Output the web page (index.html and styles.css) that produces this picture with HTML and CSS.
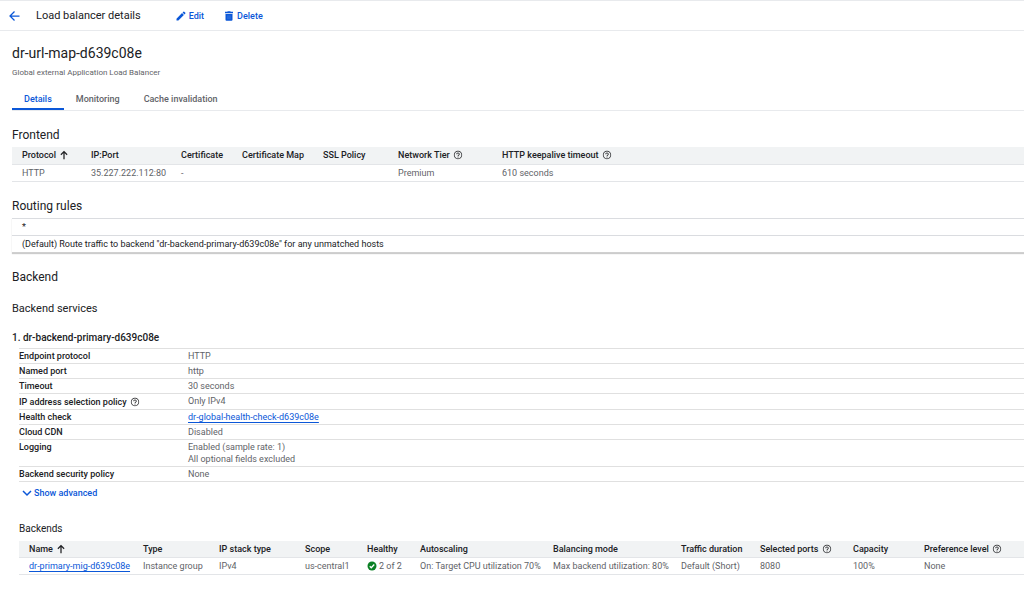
FILE: index.html
```html
<!DOCTYPE html>
<html lang="en">
<head>
    <meta charset="UTF-8">
    <meta name="viewport" content="width=device-width, initial-scale=1.0">
    <title>Load balancer details</title>
    <link rel="stylesheet" href="styles.css">
</head>
<body>
    <svg class="sprite" width="0" height="0" aria-hidden="true">
        <symbol id="help" viewBox="0 0 24 24">
            <path d="M11 18h2v-2h-2v2zm1-16C6.480 2 2 6.480 2 12s4.480 10 10 10 10-4.480 10-10S17.520 2 12 2zm0 18.300c-4.580 0-8.300-3.720-8.300-8.300S7.420 3.700 12 3.700s8.300 3.720 8.300 8.300-3.720 8.300-8.300 8.300zM12 6c-2.210 0-4 1.790-4 4h2c0-1.100.9-2 2-2s2 .9 2 2c0 2-3 1.750-3 5h2c0-2.250 3-2.500 3-5 0-2.210-1.790-4-4-4z"/>
        </symbol>
        <symbol id="up" viewBox="0 0 24 24">
            <path d="M12 22V4M4.500 11.500 12 4l7.500 7.500" fill="none" stroke="currentColor" stroke-width="3"/>
        </symbol>
    </svg>

    <header class="toolbar">
        <button class="back" type="button" aria-label="Back">
            <svg width="13" height="12" viewBox="0 0 24 24"><path d="M22 12H4M12 3l-9 9 9 9" fill="none" stroke="currentColor" stroke-width="2.500"/></svg>
        </button>
        <h1>Load balancer details</h1>
        <button class="action" type="button">
            <svg width="12" height="12" viewBox="0 0 24 24"><path d="M3 17.250V21h3.750L17.810 9.940l-3.750-3.750L3 17.250zM20.710 7.040c.39-.39.39-1.020 0-1.410l-2.340-2.340c-.39-.39-1.020-.39-1.410 0l-1.830 1.830 3.750 3.750 1.830-1.830z"/></svg>
            Edit
        </button>
        <button class="action" type="button">
            <svg width="12" height="12" viewBox="0 0 24 24"><path d="M5 8h14v11.500a2 2 0 0 1-2 2H7a2 2 0 0 1-2-2zM4 3.500h4.500l1-1h5l1 1H20v3H4z"/><path d="M10 10.500v8M14 10.500v8" stroke="#fff" stroke-opacity=".4" stroke-width="1"/></svg>
            Delete
        </button>
    </header>

    <main>
        <h2 class="name">dr-url-map-d639c08e</h2>
        <p class="kind">Global external Application Load Balancer</p>

        <nav class="tabs">
            <a class="active" href="#details">Details</a>
            <a href="#monitoring">Monitoring</a>
            <a href="#cache">Cache invalidation</a>
        </nav>

        <h3>Frontend</h3>
        <table class="grid">
            <colgroup>
                <col class="protocol"><col class="ip"><col class="cert"><col class="certmap"><col class="ssl"><col class="tier"><col>
            </colgroup>
            <thead>
                <tr>
                    <th>Protocol <svg class="sort"><use href="#up"/></svg></th>
                    <th>IP:Port</th>
                    <th>Certificate</th>
                    <th>Certificate Map</th>
                    <th>SSL Policy</th>
                    <th>Network Tier <svg class="help"><use href="#help"/></svg></th>
                    <th>HTTP keepalive timeout <svg class="help"><use href="#help"/></svg></th>
                </tr>
            </thead>
            <tbody>
                <tr>
                    <td>HTTP</td>
                    <td>35.227.222.112:80</td>
                    <td>-</td>
                    <td></td>
                    <td></td>
                    <td>Premium</td>
                    <td>610 seconds</td>
                </tr>
            </tbody>
        </table>

        <h3>Routing rules</h3>
        <div class="rules">
            <div class="rule">*</div>
            <div class="rule">(Default) Route traffic to backend "dr-backend-primary-d639c08e" for any unmatched hosts</div>
        </div>

        <h3>Backend</h3>
        <h4>Backend services</h4>

        <h5>1. dr-backend-primary-d639c08e</h5>
        <section class="service">
            <table class="props">
                <tr><th>Endpoint protocol</th><td>HTTP</td></tr>
                <tr><th>Named port</th><td>http</td></tr>
                <tr><th>Timeout</th><td>30 seconds</td></tr>
                <tr class="tall"><th>IP address selection policy <svg class="help"><use href="#help"/></svg></th><td>Only IPv4</td></tr>
                <tr><th>Health check</th><td><a href="#health">dr-global-health-check-d639c08e</a></td></tr>
                <tr><th>Cloud CDN</th><td>Disabled</td></tr>
                <tr><th>Logging</th><td>Enabled (sample rate: 1)<br>All optional fields excluded</td></tr>
                <tr><th>Backend security policy</th><td>None</td></tr>
            </table>

            <button class="advanced" type="button">
                <svg width="10" height="10" viewBox="0 0 20 20"><path d="M2 6l8 8 8-8" fill="none" stroke="currentColor" stroke-width="3"/></svg>
                Show advanced
            </button>

            <h6>Backends</h6>
            <table class="grid">
                <colgroup>
                    <col class="b-name"><col class="b-type"><col class="b-stack"><col class="b-scope"><col class="b-healthy"><col class="b-auto"><col class="b-mode"><col class="b-traffic"><col class="b-ports"><col class="b-capacity"><col>
                </colgroup>
                <thead>
                    <tr>
                        <th>Name <svg class="sort"><use href="#up"/></svg></th>
                        <th>Type</th>
                        <th>IP stack type</th>
                        <th>Scope</th>
                        <th>Healthy</th>
                        <th>Autoscaling</th>
                        <th>Balancing mode</th>
                        <th>Traffic duration</th>
                        <th>Selected ports <svg class="help"><use href="#help"/></svg></th>
                        <th>Capacity</th>
                        <th>Preference level <svg class="help"><use href="#help"/></svg></th>
                    </tr>
                </thead>
                <tbody>
                    <tr>
                        <td><a href="#mig">dr-primary-mig-d639c08e</a></td>
                        <td>Instance group</td>
                        <td>IPv4</td>
                        <td>us-central1</td>
                        <td><svg class="ok" viewBox="0 0 20 20"><circle cx="10" cy="10" r="9" fill="#0b8024"/><path d="M5.500 10.500l3 3 6-6.500" fill="none" stroke="#fff" stroke-width="2.500"/></svg>2 of 2</td>
                        <td>On: Target CPU utilization 70%</td>
                        <td>Max backend utilization: 80%</td>
                        <td>Default (Short)</td>
                        <td>8080</td>
                        <td>100%</td>
                        <td>None</td>
                    </tr>
                </tbody>
            </table>
        </section>
    </main>
</body>
</html>
```
FILE: styles.css
```css
* {
    box-sizing: border-box;
}

body {
    margin: 0;
    background-color: #fff;
    color: #202124;
    font-family: Roboto, Arial, sans-serif;
    font-size: 9px;
    line-height: 12px;
}

h1, h2, h3, h4, h5, h6, p {
    margin: 0;
    font-weight: 400;
}

svg {
    fill: currentColor;
}

.sprite {
    position: absolute;
}

button {
    display: flex;
    align-items: center;
    padding: 0;
    border: none;
    background: none;
    color: #0b57d8;
    font-family: inherit;
    font-size: 9px;
    font-weight: 500;
    line-height: 12px;
    cursor: pointer;
}

a {
    color: #0b57d8;
    text-underline-offset: 2px;
}

/* top bar */
.toolbar {
    display: flex;
    align-items: center;
    height: 31px;
    padding-left: 8px;
    border-top: 1px solid #e8eaed;
    border-bottom: 1px solid #e8eaed;
}

.toolbar h1 {
    margin: 0 34px 0 15px;
    font-size: 11px;
}

.action {
    gap: 2px;
    margin-right: 19px;
}

main {
    padding: 13px 0 0 12px;
}

.name {
    font-size: 14px;
    line-height: 18px;
}

.kind {
    margin-top: 5px;
    color: #5f6368;
    font-size: 8px;
}

.tabs {
    display: flex;
    margin-top: 9px;
    border-bottom: 1px solid #e8eaed;
}

.tabs a {
    padding: 5px 12px 3px;
    border-bottom: 2px solid transparent;
    color: #5f6368;
    font-weight: 500;
    line-height: 12px;
    text-decoration: none;
}

.tabs .active {
    border-color: #0b57d8;
    color: #0b57d8;
}

h3 {
    margin: 16px 0 4px;
    font-size: 12px;
    line-height: 16px;
}

h4 {
    margin-top: 16px;
    font-size: 11px;
    line-height: 16px;
}

h5 {
    margin: 13px 0 2px;
    font-size: 10px;
    font-weight: 500;
    line-height: 16px;
}

h6 {
    margin: 22px 0 4px;
    font-size: 10px;
    line-height: 16px;
}

/* tables */
table {
    width: 100%;
    border-collapse: collapse;
    table-layout: fixed;
}

th, td {
    text-align: left;
    white-space: nowrap;
    vertical-align: top;
}

th {
    font-weight: 500;
}

td {
    color: #5f6368;
}

.grid th, .grid td {
    height: 17px;
    padding: 2px 0 2px 10px;
    border-bottom: 1px solid #e3e5e8;
}

.grid th {
    background-color: #f1f3f4;
}

.help, .sort, .ok {
    width: 10px;
    height: 10px;
    vertical-align: -2px;
}

.help, .sort {
    margin-left: 1px;
}

.ok {
    margin-right: 2px;
}

.protocol { width: 69px; }
.ip { width: 90px; }
.cert { width: 61px; }
.certmap { width: 81px; }
.ssl { width: 75px; }
.tier { width: 104px; }

.b-name { width: 114px; }
.b-type { width: 76px; }
.b-stack { width: 86px; }
.b-scope { width: 62px; }
.b-healthy { width: 53px; }
.b-auto { width: 133px; }
.b-mode { width: 128px; }
.b-traffic { width: 79px; }
.b-ports { width: 93px; }
.b-capacity { width: 71px; }

.rules {
    border-bottom: 1px solid #d0d0d0;
    box-shadow: 0 1px 1px rgba(0, 0, 0, 0.2);
}

.rule {
    padding: 2px 10px;
    border-top: 1px solid #dadce0;
}

.service {
    padding-left: 7px;
}

.props {
    border-top: 1px solid #e0e0e0;
}

.props th, .props td {
    padding: 1px 0;
    border-bottom: 1px solid #e0e0e0;
}

.props th {
    width: 169px;
}

.props .tall th {
    padding-top: 2px;
}

.advanced {
    gap: 2px;
    margin: 5px 0 0 3px;
}
```
